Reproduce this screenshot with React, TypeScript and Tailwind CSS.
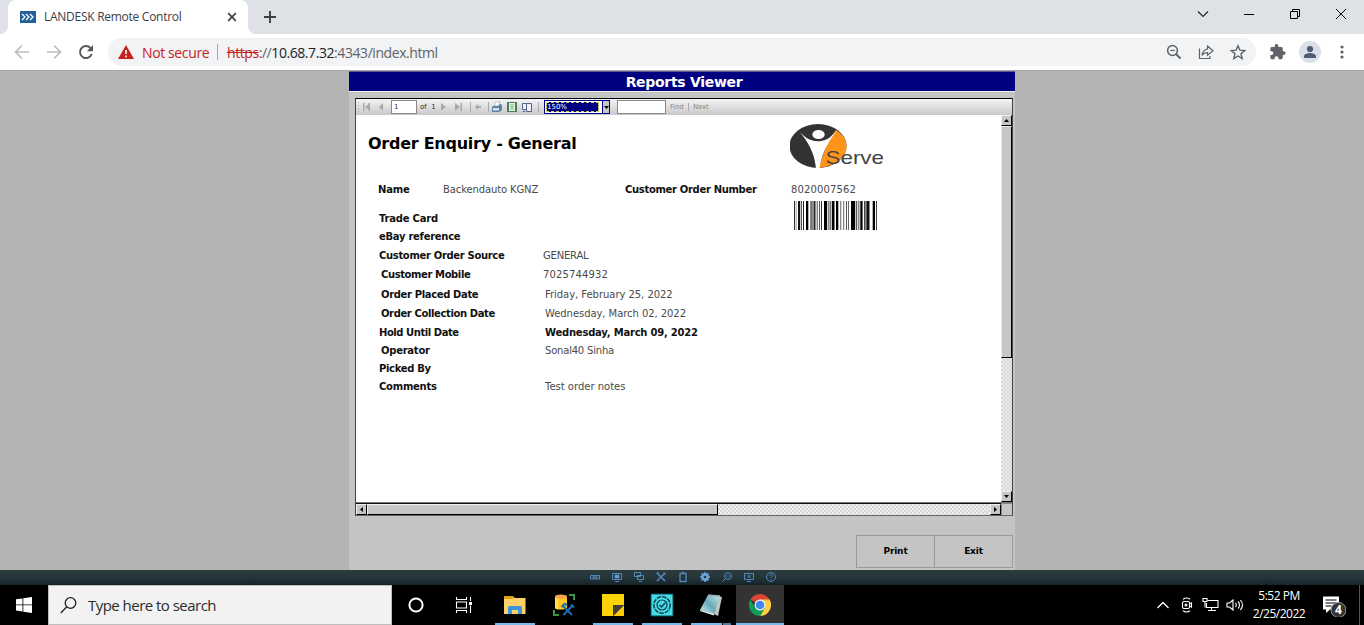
import React from "react";

const ui = "font-['Open_Sans','Noto_Sans',sans-serif]";
const verdana = "font-['DejaVu_Sans','Noto_Sans',sans-serif]";

function TabStrip() {
  return (
    <div className="flex h-[34px] shrink-0 items-stretch bg-[#dee1e6]">
      <svg className="h-[34px] w-2" viewBox="0 0 8 34">
        <path d="M8 26v8H0a8 8 0 0 0 8-8z" fill="#fff" />
      </svg>
      <div className="flex w-[240px] items-center rounded-t-lg bg-white pl-3">
        <svg className="h-3 w-4" viewBox="0 0 16 12">
          <rect width="16" height="12" fill="#22609b" />
          <path d="M2 3l3 3-3 3M6 3l3 3-3 3M10 3l3 3-3 3" fill="none" stroke="#fff" strokeWidth="1.3" />
        </svg>
        <span className="ml-2 w-[181px] whitespace-nowrap text-[12px] tracking-[-0.27px] text-[#3c4043]">
          LANDESK Remote Control
        </span>
        <svg className="h-[14px] w-[14px]" viewBox="0 0 14 14">
          <path d="M3.2 3.2l7.6 7.6M10.8 3.2L3.2 10.8" stroke="#3c4043" strokeWidth="1.7" />
        </svg>
      </div>
      <svg className="h-[34px] w-2" viewBox="0 0 8 34">
        <path d="M0 26v8h8a8 8 0 0 1-8-8z" fill="#fff" />
      </svg>
      <svg className="ml-[6px] mt-[9px] h-4 w-4" viewBox="0 0 16 16">
        <path d="M8 2v12M2 8h12" stroke="#3c4043" strokeWidth="1.9" />
      </svg>
      <div className="ml-auto flex items-start pt-[6px]">
        <svg className="mr-[30px] h-4 w-4" viewBox="0 0 16 16">
          <path d="M3 5.5l5 5 5-5" fill="none" stroke="#222" strokeWidth="1.1" />
        </svg>
        <svg className="mr-[30px] h-4 w-4" viewBox="0 0 16 16">
          <path d="M3 8.500h10" stroke="#000" strokeWidth="1" />
        </svg>
        <svg className="mr-[30px] h-4 w-4" viewBox="0 0 16 16">
          <path d="M3.500 5.500h7v7h-7zM5.500 5.500v-2h7v7h-2" fill="none" stroke="#000" strokeWidth="1" />
        </svg>
        <svg className="mr-[15px] h-4 w-4" viewBox="0 0 16 16">
          <path d="M3 3l10 10M13 3L3 13" stroke="#000" strokeWidth="1" />
        </svg>
      </div>
    </div>
  );
}

function AddressBar() {
  return (
    <div className="flex h-9 shrink-0 items-center bg-white pl-[14px]">
      <svg className="h-4 w-4" viewBox="0 0 16 16">
        <path d="M15 8H2M8 1.500L1.500 8 8 14.500" fill="none" stroke="#babcbe" strokeWidth="1.7" />
      </svg>
      <svg className="ml-4 h-4 w-4" viewBox="0 0 16 16">
        <path d="M1 8h13M8 1.500L14.500 8 8 14.500" fill="none" stroke="#babcbe" strokeWidth="1.700" />
      </svg>
      <svg className="ml-4 h-4 w-4" viewBox="0 0 16 16">
        <path d="M13.700 10A6 6 0 1 1 12.400 4" fill="none" stroke="#55595e" strokeWidth="2" />
        <path d="M15 1v6.200H8.800z" fill="#55595e" />
      </svg>
      <div className="ml-[14px] flex h-7 w-[1148px] items-center rounded-full bg-[#f1f3f4] pl-[10px] text-[14px]">
        <svg className="h-[14px] w-4" viewBox="0 0 16 14">
          <path d="M8 0l8 14H0z" fill="#c5221f" />
          <path d="M8 5v4M8 10.500v1.800" stroke="#fff" strokeWidth="1.600" />
        </svg>
        <span className="ml-2 w-[67px] whitespace-nowrap tracking-[-0.38px] text-[#c5221f]">Not secure</span>
        <span className="ml-2 h-4 w-px bg-[#a5a7aa]" />
        <span className="ml-[9px] whitespace-nowrap tracking-[-0.43px] text-[#5f6368]">
          <span className="text-[#c5221f] line-through">https</span>://
          <span className="text-[#202124]">10.68.7.32</span>:4343/index.html
        </span>
        <svg className="ml-auto mr-4 h-4 w-4" viewBox="0 0 16 16" fill="none" stroke="#5f6368">
          <circle cx="6.500" cy="6.500" r="4.900" strokeWidth="1.500" />
          <path d="M10.200 10.200l4.300 4.300" strokeWidth="2" />
          <path d="M4.200 6.500h4.600" strokeWidth="1.200" />
        </svg>
        <svg className="mr-4 h-4 w-4" viewBox="0 0 16 16" fill="none" stroke="#5f6368" strokeWidth="1.200">
          <path d="M1.500 4.500v10H12V12" />
          <path d="M9.500 2L15 6.800l-5.500 4.500V8.700C7 8.700 5.300 9.500 4 11.400 4.500 8 6.200 5.600 9.500 4.800z" />
        </svg>
        <svg className="mr-[10px] h-4 w-4" viewBox="0 0 16 16">
          <path d="M8 1.700l1.900 4.500 4.800.4-3.700 3.200 1.200 4.800L8 12l-4.200 2.600L5 9.800 1.300 6.600l4.800-.4z" fill="none" stroke="#5f6368" strokeWidth="1.400" />
        </svg>
      </div>
      <svg className="ml-[14px] h-[16px] w-[16px]" viewBox="1.500 1 22 22">
        <path
          d="M20.500 11H19V7a2 2 0 0 0-2-2h-4V3.500a2.500 2.500 0 0 0-5 0V5H4a2 2 0 0 0-2 2v3.800h1.500a2.700 2.700 0 0 1 0 5.400H2V20a2 2 0 0 0 2 2h3.800v-1.500a2.700 2.700 0 0 1 5.400 0V22H17a2 2 0 0 0 2-2v-4h1.500a2.500 2.500 0 0 0 0-5z"
          fill="#5f6368"
        />
      </svg>
      <svg className="ml-[13px] h-[22px] w-[22px]" viewBox="0 0 22 22">
        <circle cx="11" cy="11" r="11" fill="#dbdfe5" />
        <circle cx="11" cy="8" r="3.100" fill="#4d5b75" />
        <path d="M5 17v-1.700c0-2.200 4-3.300 6-3.300s6 1.100 6 3.300V17z" fill="#4d5b75" />
      </svg>
      <svg className="ml-[13px] h-4 w-4" viewBox="0 0 16 16" fill="#5f6368">
        <circle cx="8" cy="3" r="1.600" />
        <circle cx="8" cy="8" r="1.600" />
        <circle cx="8" cy="13" r="1.600" />
      </svg>
    </div>
  );
}

function ReportToolbar() {
  return (
    <div className="flex h-4 shrink-0 items-center bg-gradient-to-b from-[#f4f3f5] to-[#c9c8cb] text-[7px] text-[#333]">
      <svg className="h-4 w-[35px]" viewBox="0 0 35 16" fill="#aaa">
        <path d="M2 3h1v1H2zM2 6h1v1H2zM2 9h1v1H2zM2 12h1v1H2z" />
        <path d="M7 4h1.500v8H7zM14 4v8L9 8zM27 4v8l-4-4z" />
        <path d="M12.500 4h1.500v8h-1.500z" />
      </svg>
      <div className="flex h-[14px] w-[26px] items-center border border-[#888] bg-white pl-0.5">1</div>
      <span className="ml-[3px] w-[20px] whitespace-nowrap">of&nbsp; 1</span>
      <svg className="h-4 w-[48px]" viewBox="0 0 48 16" fill="#aaa">
        <path d="M1 4v8l5-4zM15 4v8l5-4zM20.500 4H22v8h-1.500z" />
        <path d="M30 3h1v10h-1z" />
        <path d="M35 8l3-3v2h3v2h-3v2z" />
      </svg>
      <svg className="h-4 w-[56px]" viewBox="0 0 56 16">
        <path d="M0 3h1v10H0zM50 3h1v10h-1z" fill="#aaa" />
        <path d="M7 6l6-1 1 2v4l-3 2H4V8z" fill="#5f7fa6" />
        <path d="M7.500 3H12l-1.500 4h-4z" fill="#fff" stroke="#7c94b5" strokeWidth="0.500" />
        <path d="M5 9h6v2.500H5z" fill="#d5e2ef" />
        <path d="M19 3h10v10H19z" fill="#4a7c68" />
        <path d="M21 4h6v8h-6z" fill="#e8f5df" />
        <path d="M22 6h4M22 8h4M22 10h4" stroke="#7db874" strokeWidth="1" />
        <path d="M34.500 4.500h4v6h-4zM38.500 4.500h5v8h-5z" fill="#f0f2f7" stroke="#53658a" strokeWidth="1" />
        <path d="M35 12.500h2" stroke="#53658a" />
      </svg>
      <div className="flex h-[14px] w-[66px] items-stretch border border-[#000080] bg-white">
        <div className="m-px flex w-[53px] items-center border border-dashed border-[#d4d45a] bg-[#000080] text-[7px] leading-none text-white">
          150%
        </div>
        <div className="ml-[2px] flex flex-1 items-center justify-center border-l border-[#000080] bg-[#c6c6c6]">
          <svg className="h-[3px] w-[5px]" viewBox="0 0 5 3">
            <path d="M0 0h5L2.500 3z" />
          </svg>
        </div>
      </div>
      <div className="ml-[7px] h-[14px] w-[49px] border border-[#888] bg-white" />
      <span className="ml-[4px] w-[15px] tracking-[-0.2px] text-[#888]">Find</span>
      <span className="ml-[3px] h-[8px] w-px bg-[#aaa]" />
      <span className="ml-[4px] tracking-[-0.2px] text-[#888]">Next</span>
    </div>
  );
}

const bars: [number, number, string][] = [
  [0, 1, "#333"], [1.700, 0.8, "#888"], [4, 2, "#111"], [6.700, 1.300, "#555"], [9, 1, "#222"], [12, 2.300, "#000"],
  [16.300, 1.500, "#555"], [18, 1, "#888"], [19.500, 2, "#222"], [22.700, 1, "#555"], [25, 1, "#555"], [27, 1, "#333"],
  [30, 3, "#000"], [33.700, 2, "#888"], [36.300, 1, "#444"], [38, 2.500, "#000"], [42, 2.300, "#000"], [46, 1.300, "#888"],
  [49, 1.300, "#888"], [52, 1, "#555"], [54, 1, "#666"], [57, 4.200, "#000"], [62, 1.200, "#555"], [64, 1.500, "#888"],
  [66.300, 2.300, "#000"], [70, 1.600, "#444"], [72.300, 3.200, "#111"], [78.700, 2.300, "#000"], [82, 1, "#444"],
];

function ServeLogo() {
  return (
    <svg className="h-[46px] w-[96px]" viewBox="0 0 96 46">
      <ellipse cx="28" cy="22" rx="28.500" ry="22" fill="#333" />
      <path d="M46 6C54 11 57 17 56.500 24 56 33 48 41 29 44C33 31 37 18 46 6z" fill="#ff9518" />
      <ellipse cx="28.500" cy="10.500" rx="6.200" ry="4.600" fill="#fff" />
      <path d="M10 8C17 16 24 18 31 17C38 16 42 12 47 6C39 17 32 28 29.500 44.500L26 44.500C25 34 22 23 10 8z" fill="#fff" />
      <text x="35.500" y="40" fontSize="18.500" fontFamily="Liberation Sans, sans-serif" textLength="58.500" lengthAdjust="spacingAndGlyphs" fill="#444">
        Serve
      </text>
    </svg>
  );
}

const label = "text-[10px] font-bold text-[#111]";
const value = "text-[10px] text-[#4a4a4a]";

function DetailRow({ name, text, h, indent, shift, strong, tracking, valueTracking }: { name: string; text?: string; h: string; indent?: string; shift?: string; strong?: boolean; tracking: string; valueTracking?: string }) {
  return (
    <div className={`flex items-center whitespace-nowrap ${h}`}>
      <span className={`${label} w-[164px] shrink-0 ${indent ?? ""} ${tracking}`}>{name}</span>
      <span className={`${strong ? label : value} ${shift ?? ""} ${valueTracking ?? ""}`}>{text}</span>
    </div>
  );
}

function ReportPage() {
  return (
    <div className="flex min-w-0 flex-1 flex-col bg-white">
      <div className="flex h-[60px] shrink-0">
        <h2 className="ml-[12px] mt-[19px] w-[422px] whitespace-nowrap text-[16px] leading-[20px] font-bold tracking-[-0.26px] text-black">
          Order Enquiry - General
        </h2>
        <div className="mt-[9px]">
          <ServeLogo />
        </div>
      </div>
      <div className="flex h-[28px] shrink-0 items-center whitespace-nowrap pl-[22px]">
        <span className={`${label} w-[65px] tracking-[-0.2px]`}>Name</span>
        <span className={`${value} w-[182px] tracking-[-0.12px]`}>Backendauto KGNZ</span>
        <span className={`${label} w-[166px] tracking-[-0.32px]`}>Customer Order Number</span>
        <span className={`${value} tracking-[0.15px]`}>8020007562</span>
      </div>
      <div className="flex min-h-0 flex-1 items-start">
        <div className="w-[438px] pl-[23px] pt-[5px]">
          <DetailRow name="Trade Card" h="h-[20px]" tracking="tracking-[-0.2px]" />
          <DetailRow name="eBay reference" h="h-[17px]" tracking="tracking-[-0.28px]" />
          <DetailRow name="Customer Order Source" text="GENERAL" h="h-[20px]" tracking="tracking-[-0.33px]" valueTracking="tracking-[-0.2px]" />
          <DetailRow name="Customer Mobile" text="7025744932" h="h-[19px]" indent="pl-[2px]" tracking="tracking-[-0.4px]" valueTracking="tracking-[0.15px]" />
          <DetailRow name="Order Placed Date" text="Friday, February 25, 2022" h="h-[20px]" indent="pl-[2px]" shift="pl-[2px]" tracking="tracking-[-0.35px]" valueTracking="tracking-[-0.04px]" />
          <DetailRow name="Order Collection Date" text="Wednesday, March 02, 2022" h="h-[19px]" indent="pl-[2px]" shift="pl-[2px]" tracking="tracking-[-0.38px]" valueTracking="tracking-[-0.06px]" />
          <DetailRow name="Hold Until Date" text="Wednesday, March 09, 2022" h="h-[18px]" shift="pl-[2px]" strong tracking="tracking-[-0.44px]" valueTracking="tracking-[-0.22px]" />
          <DetailRow name="Operator" text="Sonal40 Sinha" h="h-[18px]" indent="pl-[2px]" shift="pl-[2px]" tracking="tracking-[-0.25px]" valueTracking="tracking-[-0.2px]" />
          <DetailRow name="Picked By" h="h-[18px]" tracking="tracking-[-0.33px]" />
          <DetailRow name="Comments" text="Test order notes" h="h-[19px]" shift="pl-[2px]" tracking="tracking-[-0.25px]" />
        </div>
        <svg className="-mt-[2px] h-[29px] w-[84px]" viewBox="0 0 84 29">
          {bars.map(([x, w, c]) => (
            <rect key={x} x={x} width={w} height="29" fill={c} />
          ))}
        </svg>
      </div>
    </div>
  );
}

const bevel = "border border-t-[#eee] border-l-[#eee] border-r-black border-b-black bg-[#c6c6c6]";
const dither = "bg-[repeating-conic-gradient(#d6d6d6_0_25%,#ededed_0_50%)] bg-[length:4px_4px]";

function Arrow({ d }: { d: string }) {
  return (
    <svg className="h-[7px] w-[7px]" viewBox="0 0 7 7">
      <path d={d} />
    </svg>
  );
}

function VerticalScroll() {
  return (
    <div className={`flex w-[11px] shrink-0 flex-col ${dither}`}>
      <div className={`flex h-[11px] items-center justify-center ${bevel}`}>
        <Arrow d="M1 5h5L3.500 2z" />
      </div>
      <div className={`h-[232px] ${bevel}`} />
      <div className="flex-1" />
      <div className={`flex h-[11px] items-center justify-center ${bevel}`}>
        <Arrow d="M1 2h5L3.500 5z" />
      </div>
    </div>
  );
}

function HorizontalScroll() {
  return (
    <div className="flex h-[13px] shrink-0 border-b border-[#666]">
      <div className={`flex min-w-0 flex-1 border-t border-[#111] ${dither}`}>
        <div className={`flex w-[11px] items-center justify-center ${bevel}`}>
          <Arrow d="M5 1v5L2 3.500z" />
        </div>
        <div className={`w-[351px] ${bevel}`} />
        <div className="flex-1" />
        <div className={`flex w-[11px] items-center justify-center ${bevel}`}>
          <Arrow d="M2 1v5l3-2.500z" />
        </div>
      </div>
      <div className="w-[11px] border-t border-l border-[#888] bg-[#c6c6c6]" />
    </div>
  );
}

function ReportsViewer() {
  return (
    <div className={`flex h-[499px] w-[666px] flex-col bg-[#c4c4c4] ${verdana}`}>
      <div className="flex h-[21px] shrink-0 items-center justify-center border-t border-b border-t-[#5c5c8e] border-b-[#eee] bg-[#000080] pl-[4px] text-[14px] leading-none font-bold tracking-[-0.3px] text-white">
        Reports Viewer
      </div>
      <div className="ml-[6px] mt-[6px] flex h-[418px] w-[658px] shrink-0 flex-col border border-[#444] border-t-black border-b-0">
        <ReportToolbar />
        <div className="flex min-h-0 flex-1 border-b border-[#777]">
          <ReportPage />
          <VerticalScroll />
        </div>
        <HorizontalScroll />
      </div>
      <div className="mr-[2px] mt-[19px] flex justify-end text-[9px] font-bold tracking-[-0.15px] text-black">
        <button className="h-[33px] w-[79px] border border-[#9a9a9a]">Print</button>
        <button className="h-[33px] w-[78px] border border-l-0 border-[#9a9a9a]">Exit</button>
      </div>
    </div>
  );
}

const remoteIcons: React.ReactNode[] = [
  <path key="k" d="M1.500 4.500h9v3.500h-9zM3 6h6M4 7h4" />,
  <g key="m"><path d="M1.500 2.500h9v6h-9zM4 10.500h4" /><path d="M4 4h4v3H4z" fill="#6ba4df" /></g>,
  <path key="w" d="M1.500 1.500h6v4h-6zM4.500 5.500v-1h6v4h-6zM6 10.500h3" />,
  <path key="t" d="M2 2l8 8M10 2l-8 8M1.500 2.500l2-1M8.500 1.500l2 2" strokeWidth="1.600" />,
  <path key="c" d="M3 2.500h6v8H3zM5 1.500h2" strokeWidth="1.300" />,
  <g key="g" stroke="#6ba4df"><circle cx="6" cy="6" r="2.600" strokeWidth="2.600" /><path d="M6 1v2M6 9v2M1 6h2M9 6h2M2.500 2.500l1 1M8.500 8.500l1 1M2.500 9.500l1-1M8.500 3.500l1-1" strokeWidth="1.500" /></g>,
  <g key="s"><circle cx="7" cy="5" r="3.400" /><path d="M4.500 7.500L1.500 10.500M5.500 5h3" /></g>,
  <path key="x" d="M1.500 2.500h9v6h-9zM4 10.500h4M4.500 4l3 3M7.500 4l-3 3" />,
  <g key="h"><circle cx="6" cy="6" r="4.500" /><path d="M4.500 4.800c0-2 3-2 3-.2 0 1-1.500 1-1.500 2.400M6 8v1" /></g>,
];

function RemoteBar() {
  return (
    <div className="flex h-[15px] shrink-0 items-center justify-center gap-[10px] bg-gradient-to-b from-[#2b3b3e] via-[#25363a] to-[#14232a] pb-px pl-px">
      {remoteIcons.map((icon, i) => (
        <svg key={i} className="h-3 w-3" viewBox="0 0 12 12" fill="none" stroke="#5488bd" strokeWidth="1">
          {icon}
        </svg>
      ))}
    </div>
  );
}

function TaskButton({ children, line }: { children: React.ReactNode; line?: React.ReactNode }) {
  return (
    <div className="flex h-10 w-[49px] flex-col items-center">
      <div className="flex h-[38px] items-center justify-center pt-[2px]">{children}</div>
      {line}
    </div>
  );
}

const underline = <div className="h-[2px] w-10 bg-[#76b9ed]" />;

function Taskbar() {
  return (
    <div className="flex h-10 shrink-0 items-center bg-black text-white">
      <div className="flex w-12 justify-center">
        <svg className="h-4 w-4" viewBox="0 0 16 16" fill="#fff">
          <path d="M0 2.300L6.500 1.400V7.500H0zM7.300 1.300L16 0v7.500H7.300zM0 8.300h6.500v6.200L0 13.600zM7.300 8.300H16V16l-8.700-1.300z" />
        </svg>
      </div>
      <div className="flex h-10 w-[344px] items-center border border-[#bdbdbd] bg-[#f2f2f2] pl-[11px]">
        <svg className="h-[17px] w-[17px]" viewBox="0 0 17 17" fill="none" stroke="#222" strokeWidth="1.300">
          <circle cx="10.500" cy="6" r="5.300" />
          <path d="M6.800 9.800L0.800 16" />
        </svg>
        <span className="ml-[11px] whitespace-nowrap text-[15px] tracking-[-0.53px] text-[#2b2b2b]">Type here to search</span>
      </div>
      <div className="flex w-12 justify-center">
        <svg className="h-4 w-4" viewBox="0 0 16 16">
          <circle cx="8" cy="8" r="6.600" fill="none" stroke="#fff" strokeWidth="2" />
        </svg>
      </div>
      <div className="flex w-12 justify-center">
        <svg className="h-[16px] w-[18px]" viewBox="0 0 18 16" fill="none" stroke="#fff" strokeWidth="1.100">
          <path d="M1.500 0v2.500h10V0M1.500 16v-2.500h10V16M1.500 5h10v6h-10zM15.500 0v4M15.500 8.500V16" />
          <path d="M14 5h3v3h-3z" fill="#fff" stroke="none" />
        </svg>
      </div>
      <div className="ml-[2px] flex">
        <TaskButton line={underline}>
          <svg className="h-[18px] w-[22px]" viewBox="0 0 22 18">
            <path d="M0 0h9l2 2h10v4H0z" fill="#dca014" />
            <path d="M0 3h8l2-1h11.500v16H0z" fill="#ffd168" />
            <path d="M4 11.500a1.500 1.500 0 0 1 1.500-1.500h11a1.500 1.500 0 0 1 1.500 1.500V18h-4v-4H8v4H4z" fill="#3a95dd" />
          </svg>
        </TaskButton>
        <TaskButton>
          <svg className="h-[22px] w-[22px]" viewBox="0 0 22 22">
            <path d="M2 2.500v11c0 2.700 12 2.700 12 0v-11z" fill="#ffc91f" />
            <path d="M2 2.500v11c0 1 1.500 1.700 3 1.900V2.500z" fill="#ffe04d" />
            <ellipse cx="8" cy="2.700" rx="6" ry="2.300" fill="#f5a44a" />
            <path d="M16 1h5v5M6 21H1v-5" fill="none" stroke="#3f9440" strokeWidth="2" />
            <path d="M10 12l9 9M20 11l-9.500 10" stroke="#1a6cb5" strokeWidth="2" />
            <path d="M8.500 13l3-3 3 1M18 10.500l3 3" fill="none" stroke="#1a6cb5" strokeWidth="2" />
          </svg>
        </TaskButton>
        <TaskButton line={underline}>
          <svg className="h-[22px] w-[22px]" viewBox="0 0 22 22">
            <path d="M0 0h22v11L11 22H0z" fill="#fed306" />
            <path d="M11 11h11v11H11z" fill="#3a3938" />
            <path d="M22 11L11 22h11z" fill="#fec802" />
            <path d="M11 11h11L11 22z" fill="#403d38" />
          </svg>
        </TaskButton>
        <TaskButton line={underline}>
          <svg className="h-6 w-6" viewBox="0 0 24 24" fill="none">
            <path d="M1 1h22v22H1z" fill="#45dbe7" stroke="#0d4c58" />
            <circle cx="12" cy="12" r="8.200" stroke="#123e4b" strokeWidth="1.500" strokeDasharray="4.500 1" />
            <circle cx="12" cy="12" r="5" stroke="#123e4b" strokeWidth="1.200" />
            <path d="M9.500 12l2 2 3.500-4" stroke="#123e4b" strokeWidth="1.500" />
          </svg>
        </TaskButton>
        <TaskButton line={<div className="flex h-[2px] w-10"><div className="w-[31px] bg-[#76b9ed]" /><div className="ml-px flex-1 bg-[#517fa4]" /></div>}>
          <svg className="h-[22px] w-[22px]" viewBox="0 0 22 22">
            <defs>
              <linearGradient id="pad" x1="1" y1="0" x2="0" y2="1">
                <stop offset="0" stopColor="#c6e6e9" />
                <stop offset="0.500" stopColor="#69a9b7" />
                <stop offset="1" stopColor="#d6edf0" />
              </linearGradient>
            </defs>
            <path d="M18 2l4 1-4 19-4-2z" fill="#c4c6bd" />
            <path d="M8 1l12 1-6 19L0 16z" fill="url(#pad)" />
            <path d="M0 16l14 4v1.500L0 17z" fill="#e9eff0" />
            <path d="M8 1l12 1" stroke="#98a7a9" strokeWidth="1.300" />
          </svg>
        </TaskButton>
        <div className="ml-px flex h-10 w-12 flex-col items-center bg-[#333]">
          <div className="flex h-[38px] items-center pt-[2px]">
            <svg className="h-[22px] w-[22px]" viewBox="0 0 22 22">
              <path d="M11 11L1.470 5.500A11 11 0 0 1 20.530 5.500z" fill="#db4437" />
              <path d="M11 5.500h9.530A11 11 0 0 1 11 22l4.760-8.250z" fill="#ffcd40" />
              <path d="M1.470 5.500A11 11 0 0 0 11 22l4.760-8.250L11 11l-4.760 2.750z" fill="#0f9d58" />
              <circle cx="11" cy="11" r="5.500" fill="#f1f1f1" />
              <circle cx="11" cy="11" r="4.300" fill="#4285f4" />
            </svg>
          </div>
          <div className="h-[2px] w-12 bg-[#76b9ed]" />
        </div>
      </div>
      <div className="ml-auto flex h-10 items-center">
        <svg className="h-4 w-4" viewBox="0 0 16 16">
          <path d="M2.500 11L8 5.500l5.500 5.500" fill="none" stroke="#fff" strokeWidth="1.300" />
        </svg>
        <svg className="ml-[8px] h-4 w-4" viewBox="0 0 16 16" fill="none" stroke="#fff" strokeWidth="1.100">
          <rect x="3.500" y="4.500" width="7" height="7" rx="1.500" />
          <circle cx="7" cy="8" r="1" />
          <path d="M10.500 7l2-1v4l-2-1M4 2.200c2-1.300 5-1.300 7 0M4 13.800c2 1.300 5 1.300 7 0" />
        </svg>
        <svg className="ml-[7px] h-4 w-[17px]" viewBox="0 0 17 16" fill="none" stroke="#fff" strokeWidth="1.100">
          <path d="M5.500 3.500h10.500v7H4.500V6M9.500 10.500v3M6 13.500h8" />
          <path d="M1 1.500h4v3H1zM3 4.500v6" />
        </svg>
        <svg className="ml-[7px] h-4 w-[18px]" viewBox="0 0 18 16" fill="none" stroke="#fff" strokeWidth="1.100">
          <path d="M1 6h2.500L7 3v10L3.500 10H1z" />
          <path d="M9.500 6c1 1 1 3 0 4M12 4.500c2 2 2 5 0 7M14.300 3c2.700 3 2.700 7 0 10" />
        </svg>
        <div className="ml-[8px] flex w-[54px] flex-col items-center whitespace-nowrap text-[12px] leading-[18px] tracking-[-0.5px]">
          <span>5:52 PM</span>
          <span>2/25/2022</span>
        </div>
        <div className="relative ml-[16px] mr-[13px] h-6 w-6">
          <svg className="h-6 w-6" viewBox="0 0 24 24">
            <path d="M1 3.500h16v13h-9l-4 3.500v-3.500H1z" fill="#fff" />
            <path d="M3.500 7h11M3.500 10h11M3.500 13h6" stroke="#000" strokeWidth="1.100" />
            <circle cx="16.500" cy="17" r="7.500" fill="#333" stroke="#999" strokeWidth="1" />
          </svg>
          <span className="absolute left-[12px] top-[9px] w-[9px] text-center text-[12px] leading-4 font-bold">4</span>
        </div>
        <div className="mr-[4px] h-10 w-px bg-[#555]" />
      </div>
    </div>
  );
}

export default function App() {
  return (
    <div className={`flex h-[625px] w-[1364px] flex-col overflow-hidden ${ui}`}>
      <TabStrip />
      <AddressBar />
      <div className="flex h-[500px] shrink-0 justify-center border-t border-[#a8a8a8] bg-[#b4b4b4]">
        <ReportsViewer />
      </div>
      <RemoteBar />
      <Taskbar />
    </div>
  );
}
